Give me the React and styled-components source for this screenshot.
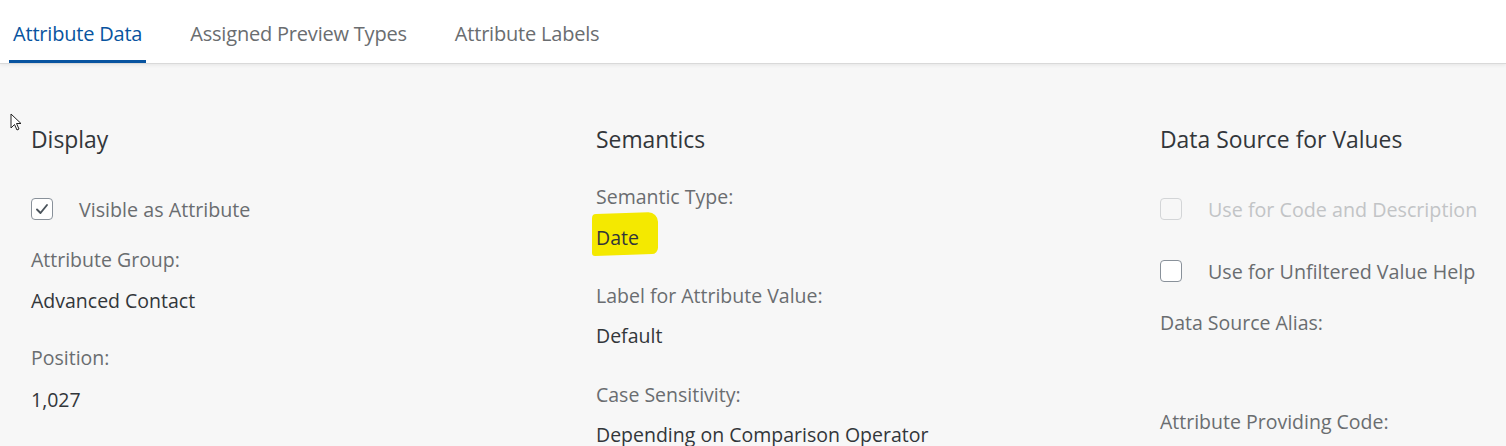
import React from "react";
import styled, { createGlobalStyle } from "styled-components";

const Global = createGlobalStyle`
  html, body { margin: 0; padding: 0; background: #f7f7f7; }
  body { font-family: "Open Sans", "Liberation Sans", sans-serif; overflow: hidden; }
`;

const Page = styled.div`
  width: 1506px;
  height: 446px;
  background: #f7f7f7;
  position: relative;
  overflow: hidden;
`;

const TabBar = styled.div`
  height: 63px;
  background: #ffffff;
  display: flex;
  align-items: stretch;
  padding-left: 9px;
  gap: 40px;
  box-shadow: 0 1px 0 #d9d9d9, 0 2px 4px rgba(0,0,0,0.08);
  position: relative;
  z-index: 1;
`;

const Tab = styled.div`
  display: flex;
  align-items: flex-start;
  padding: 20px 4px 0 4px;
  font-size: 20px;
  line-height: 28px;
  color: ${p => (p.$active ? "#0854a0" : "#6a6d70")};
  border-bottom: 3px solid ${p => (p.$active ? "#0854a0" : "transparent")};
  box-sizing: border-box;
  letter-spacing: -0.2px;
`;

const Content = styled.div`
  display: grid;
  grid-template-columns: 565px 564px 1fr;
  padding: 61px 0 0 31px;
`;

const Column = styled.div`
  display: flex;
  flex-direction: column;
`;

const Heading = styled.div`
  font-size: 22.9px;
  color: #32363a;
  height: 32px;
  line-height: 32px;
  margin-bottom: ${p => p.$mb}px;
  white-space: nowrap;
`;

const CheckRow = styled.div`
  display: flex;
  align-items: center;
  height: 26px;
  margin-bottom: ${p => p.$mb || 0}px;
  color: ${p => (p.$disabled ? "#c2c4c6" : "#6a6d70")};
  font-size: 19.7px;
  white-space: nowrap;
`;

const Box = styled.span`
  width: 22px;
  height: 22px;
  box-sizing: border-box;
  border: 1px solid ${p => (p.$disabled ? "#d3d5d7" : "#89919a")};
  border-radius: 4px;
  background: ${p => (p.$disabled ? "transparent" : "#ffffff")};
  margin-right: 26px;
  display: inline-flex;
  align-items: center;
  justify-content: center;
  flex-shrink: 0;
`;

const Label = styled.div`
  font-size: 19.5px;
  color: #6a6d70;
  height: 26px;
  line-height: 26px;
  margin-bottom: ${p => p.$mb || 0}px;
  white-space: nowrap;
`;

const Value = styled.div`
  font-size: 19.5px;
  color: #32363a;
  height: 26px;
  line-height: 26px;
  position: relative;
  margin-bottom: ${p => p.$mb || 0}px;
  white-space: nowrap;
`;

const HighlightText = styled.span`
  position: relative;
  z-index: 1;
`;

const Marker = styled.span`
  position: absolute;
  left: -4px;
  top: -12px;
  width: 66px;
  height: 42px;
  background: #f4e900;
  border-radius: 4px 10px 6px 3px;
  transform: skewY(-2deg);
  z-index: 0;
`;

const Spacer = styled.div`
  height: ${p => p.$h}px;
`;

const Cursor = styled.svg`
  position: absolute;
  left: 10px;
  top: 113px;
`;

const Check = () => (
  <svg width="14" height="12" viewBox="0 0 14 12">
    <path d="M2 6.5 L5.5 10 L12 2" fill="none" stroke="#4a535b" strokeWidth="1.9" strokeLinecap="round" strokeLinejoin="round" />
  </svg>
);

export default function App() {
  return (
    <>
      <Global />
      <Page>
        <TabBar>
          <Tab $active>Attribute Data</Tab>
          <Tab>Assigned Preview Types</Tab>
          <Tab>Attribute Labels</Tab>
        </TabBar>
        <Cursor width="13" height="19" viewBox="0 0 13 19">
          <path d="M1 1 L1 15 L4.5 11.5 L7 17 L9 16 L6.5 10.5 L11 10.5 Z" fill="#ffffff" stroke="#222" strokeWidth="1" strokeLinejoin="round" />
        </Cursor>
        <Content>
          <Column>
            <Heading $mb={40}>Display</Heading>
            <CheckRow $mb={25}>
              <Box><Check /></Box>
              Visible as Attribute
            </CheckRow>
            <Label $mb={15}>Attribute Group:</Label>
            <Value $mb={31}>Advanced Contact</Value>
            <Label $mb={16}>Position:</Label>
            <Value>1,027</Value>
          </Column>
          <Column>
            <Heading $mb={28}>Semantics</Heading>
            <Label $mb={15}>Semantic Type:</Label>
            <Value $mb={32}>
              <Marker />
              <HighlightText>Date</HighlightText>
            </Value>
            <Label $mb={14}>Label for Attribute Value:</Label>
            <Value $mb={33}>Default</Value>
            <Label $mb={14}>Case Sensitivity:</Label>
            <Value>Depending on Comparison Operator</Value>
          </Column>
          <Column>
            <Heading $mb={40}>Data Source for Values</Heading>
            <CheckRow $disabled $mb={36}>
              <Box $disabled />
              Use for Code and Description
            </CheckRow>
            <CheckRow $mb={26}>
              <Box />
              Use for Unfiltered Value Help
            </CheckRow>
            <Label>Data Source Alias:</Label>
            <Spacer $h={73} />
            <Label>Attribute Providing Code:</Label>
          </Column>
        </Content>
      </Page>
    </>
  );
}
